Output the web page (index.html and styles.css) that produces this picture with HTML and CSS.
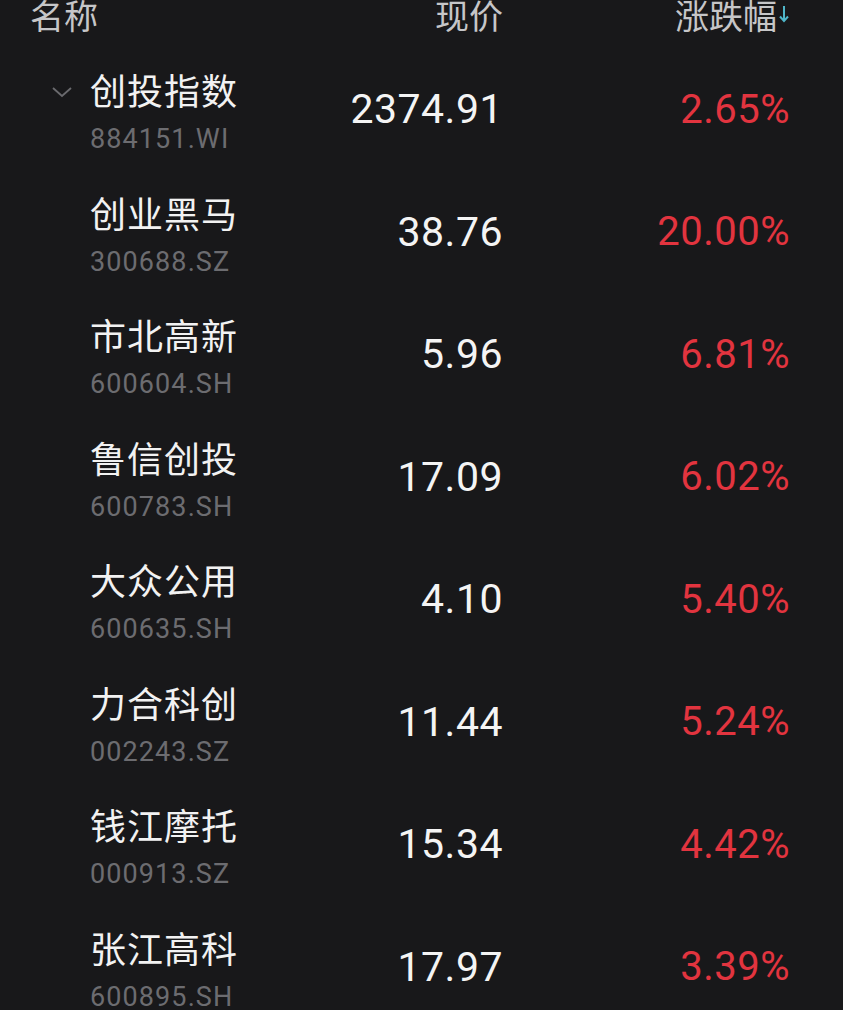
FILE: index.html
```html
<!DOCTYPE html>
<html lang="zh-CN">
<head>
<meta charset="utf-8">
<link rel="stylesheet" href="styles.css">
</head>
<body>
<div class="page">
  <div class="head">
    <div class="h-name">名称</div>
    <div class="h-price">现价</div>
    <div class="h-pct">涨跌幅<svg class="sort" width="12" height="18" viewBox="0 0 12 18"><path d="M6 1 V16 M2 11.5 L6 16 L10 11.5" fill="none" stroke="#4fb6c9" stroke-width="2"/></svg></div>
  </div>
  <div class="row">
    <div class="chev"><svg width="22" height="12" viewBox="0 0 22 12"><path d="M2 2 L11 10 L20 2" fill="none" stroke="#6a6a6e" stroke-width="1.8"/></svg></div>
    <div class="name"><div class="cn">创投指数</div><div class="code">884151.WI</div></div>
    <div class="price">2374.91</div>
    <div class="pct">2.65%</div>
  </div>
  <div class="row">
    <div class="chev"></div>
    <div class="name"><div class="cn">创业黑马</div><div class="code">300688.SZ</div></div>
    <div class="price">38.76</div>
    <div class="pct">20.00%</div>
  </div>
  <div class="row">
    <div class="chev"></div>
    <div class="name"><div class="cn">市北高新</div><div class="code">600604.SH</div></div>
    <div class="price">5.96</div>
    <div class="pct">6.81%</div>
  </div>
  <div class="row">
    <div class="chev"></div>
    <div class="name"><div class="cn">鲁信创投</div><div class="code">600783.SH</div></div>
    <div class="price">17.09</div>
    <div class="pct">6.02%</div>
  </div>
  <div class="row">
    <div class="chev"></div>
    <div class="name"><div class="cn">大众公用</div><div class="code">600635.SH</div></div>
    <div class="price">4.10</div>
    <div class="pct">5.40%</div>
  </div>
  <div class="row">
    <div class="chev"></div>
    <div class="name"><div class="cn">力合科创</div><div class="code">002243.SZ</div></div>
    <div class="price">11.44</div>
    <div class="pct">5.24%</div>
  </div>
  <div class="row">
    <div class="chev"></div>
    <div class="name"><div class="cn">钱江摩托</div><div class="code">000913.SZ</div></div>
    <div class="price">15.34</div>
    <div class="pct">4.42%</div>
  </div>
  <div class="row">
    <div class="chev"></div>
    <div class="name"><div class="cn">张江高科</div><div class="code">600895.SH</div></div>
    <div class="price">17.97</div>
    <div class="pct">3.39%</div>
  </div>
</div>
</body>
</html>
```

FILE: styles.css
```css
html, body {
  margin: 0;
  padding: 0;
  background: #18181a;
  height: 100%;
  overflow: hidden;
}
.page {
  width: 843px;
  font-family: Roboto, "Noto Sans CJK SC", sans-serif;
}
.head {
  display: grid;
  grid-template-columns: 240px 233px 287px;
  padding-left: 30px;
  height: 48px;
  font-size: 34px;
  line-height: 30px;
  color: #c6c6c8;
  font-family: "Noto Sans CJK SC", sans-serif;
}
.h-price, .h-pct {
  text-align: right;
}
.h-pct {
  display: flex;
  justify-content: flex-end;
  align-items: flex-start;
}
.sort {
  margin-top: 5px;
  margin-left: 1px;
}
.row {
  display: grid;
  grid-template-columns: 90px 180px 233px 287px;
  height: 122.5px;
  align-items: center;
}
.chev {
  align-self: start;
  padding-top: 38px;
  padding-left: 51px;
}
.chev svg {
  display: block;
}
.name {
  display: flex;
  flex-direction: column;
  margin-top: 2px;
}
.cn {
  font-family: "Noto Sans CJK SC", sans-serif;
  font-size: 36px;
  line-height: 46px;
  color: #f2f2f2;
  letter-spacing: 1px;
}
.code {
  margin-top: 12px;
  font-size: 27px;
  line-height: 30px;
  color: #6c6c70;
  letter-spacing: 1.1px;
}
.price {
  text-align: right;
  font-size: 41px;
  color: #f4f4f4;
  letter-spacing: 0.5px;
}
.pct {
  text-align: right;
  font-size: 40px;
  color: #e2343f;
  letter-spacing: 0.5px;
}
```
